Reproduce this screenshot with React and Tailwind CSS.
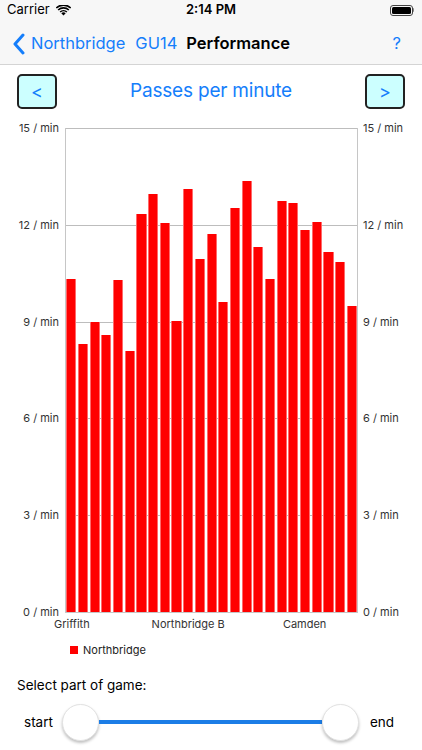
import React from "react";

const values = [
  10.33, 8.3, 9.0, 8.6, 10.28, 8.1, 12.33, 12.95, 12.05, 9.03, 13.1, 10.95, 11.7,
  9.6, 12.52, 13.35, 11.32, 10.33, 12.74, 12.69, 11.85, 12.09, 11.17, 10.84, 9.48,
];
const yLabels = ["15 / min", "12 / min", "9 / min", "6 / min", "3 / min", "0 / min"];
const PLOT_H = 484;

function Wifi() {
  return (
    <svg width="15" height="11" viewBox="0 0 15 11">
      <path d="M7.5 10.5 L5.3 8.2 A3.2 3.2 0 0 1 9.7 8.2 Z" fill="#000" />
      <path d="M3.6 6.5 A5.6 5.6 0 0 1 11.4 6.5 L10.3 7.6 A4.1 4.1 0 0 0 4.7 7.6 Z" fill="#000" />
      <path d="M1.6 4.5 A8.4 8.4 0 0 1 13.4 4.5 L12.3 5.6 A6.9 6.9 0 0 0 2.7 5.6 Z" fill="#000" />
      <path d="M-0.3 2.5 A11 11 0 0 1 15.3 2.5 L14.2 3.6 A9.6 9.6 0 0 0 0.8 3.6 Z" fill="#000" />
    </svg>
  );
}

function Battery() {
  return (
    <div className="flex items-center">
      <div className="w-[23px] h-[11px] rounded-[3px] border border-[#444] p-[1px]">
        <div className="w-full h-full rounded-[1.5px] bg-black" />
      </div>
      <div className="w-[1.5px] h-[4px] bg-[#888] rounded-r-sm" />
    </div>
  );
}

function SideLabels({ align }) {
  return (
    <div
      className={`flex flex-col justify-between h-[496px] -mt-[6px] -mb-[6px] text-[11px] leading-[12px] text-[#333] ${
        align === "right" ? "items-end pr-[6px] w-[65px]" : "items-start pl-[5px]"
      }`}
    >
      {yLabels.map((l) => (
        <span key={l} className="whitespace-nowrap">{l}</span>
      ))}
    </div>
  );
}

export default function App() {
  return (
    <div
      className="w-[422px] h-[750px] bg-white overflow-hidden text-black"
      style={{ fontFamily: "Inter, 'Liberation Sans', sans-serif" }}
    >
      {/* status bar */}
      <div className="h-5 bg-[#f7f7f7] flex items-center justify-between px-[7px] text-[13px]">
        <div className="flex items-center gap-[6px] w-[110px]">
          <span>Carrier</span>
          <Wifi />
        </div>
        <span className="font-semibold">2:14 PM</span>
        <div className="w-[110px] flex justify-end pr-[1px]">
          <Battery />
        </div>
      </div>

      {/* nav bar */}
      <div className="h-[45px] bg-[#f7f7f7] border-b border-[#d4d4d4] flex items-center pt-[3px] pl-[12px] pr-[21px] text-[16.5px]">
        <svg width="14" height="22" viewBox="0 0 14 22" className="mr-[5px]">
          <polyline points="11,2 3,11 11,20" fill="none" stroke="#157efb" strokeWidth="3" strokeLinecap="round" strokeLinejoin="round" />
        </svg>
        <span className="text-[#157efb]">Northbridge</span>
        <span className="text-[#157efb] ml-[10px]">GU14</span>
        <span className="font-semibold ml-[9px]">Performance</span>
        <span className="text-[#157efb] ml-auto">?</span>
      </div>

      {/* title row */}
      <div className="flex items-center justify-between px-[17px] pt-[9px]">
        <button className="w-[40px] h-[35px] bg-[#ccffff] border-2 border-[#222] rounded-[5px] text-[#157efb] text-[18px] flex items-center justify-center">
          &lt;
        </button>
        <span className="text-[#157efb] text-[19px] tracking-[-0.2px]">Passes per minute</span>
        <button className="w-[40px] h-[35px] bg-[#ccffff] border-2 border-[#222] rounded-[5px] text-[#157efb] text-[18px] flex items-center justify-center">
          &gt;
        </button>
      </div>

      {/* chart */}
      <div className="flex mt-[19px]">
        <SideLabels align="right" />
        <div className="w-[293px] h-[485px] border-x border-b border-[#c6c6c6] grid">
          <div className="col-start-1 row-start-1 flex flex-col">
            {[0, 1, 2, 3, 4].map((i) => (
              <div key={i} className="flex-1 border-t border-[#bdbdbd]" />
            ))}
          </div>
          <div className="col-start-1 row-start-1 flex items-end gap-[1.6px] px-[0.3px]">
            {values.map((v, i) => (
              <div
                key={i}
                className="flex-1 bg-[#ff0000] border-x border-[#ff6a6a]"
                style={{ height: `${(v / 15) * PLOT_H}px` }}
              />
            ))}
          </div>
        </div>
        <SideLabels align="left" />
      </div>

      {/* x labels */}
      <div className="ml-[66px] w-[291px] grid grid-cols-[repeat(25,minmax(0,1fr))] text-[11px] leading-[14px] text-[#333] mt-[4px]">
        <div className="col-start-1 flex justify-center whitespace-nowrap">Griffith</div>
        <div className="col-start-11 flex justify-center whitespace-nowrap">Northbridge B</div>
        <div className="col-start-21 flex justify-center whitespace-nowrap">Camden</div>
      </div>

      {/* legend */}
      <div className="flex items-center gap-[5px] ml-[70px] mt-[11px] text-[11px] text-[#222]">
        <div className="w-[8px] h-[8px] bg-[#ff0000]" />
        <span>Northbridge</span>
      </div>

      <div className="ml-[17px] mt-[17px] text-[13.5px] leading-[18px]">Select part of game:</div>

      {/* slider */}
      <div className="flex items-center pl-[24px] pr-[30px] mt-[10px] text-[13.5px]">
        <span className="w-[28px] whitespace-nowrap">start</span>
        <div className="ml-[10px] w-[37px] h-[37px] rounded-full bg-white border border-[#e2e2e2] shadow-[0_2px_3px_rgba(0,0,0,0.25)] shrink-0" />
        <div className="flex-1 h-[4px] bg-[#1c7de6]" />
        <div className="w-[37px] h-[37px] rounded-full bg-white border border-[#e2e2e2] shadow-[0_2px_3px_rgba(0,0,0,0.25)] shrink-0" />
        <span className="ml-[11px] w-[22px] whitespace-nowrap">end</span>
      </div>
    </div>
  );
}
